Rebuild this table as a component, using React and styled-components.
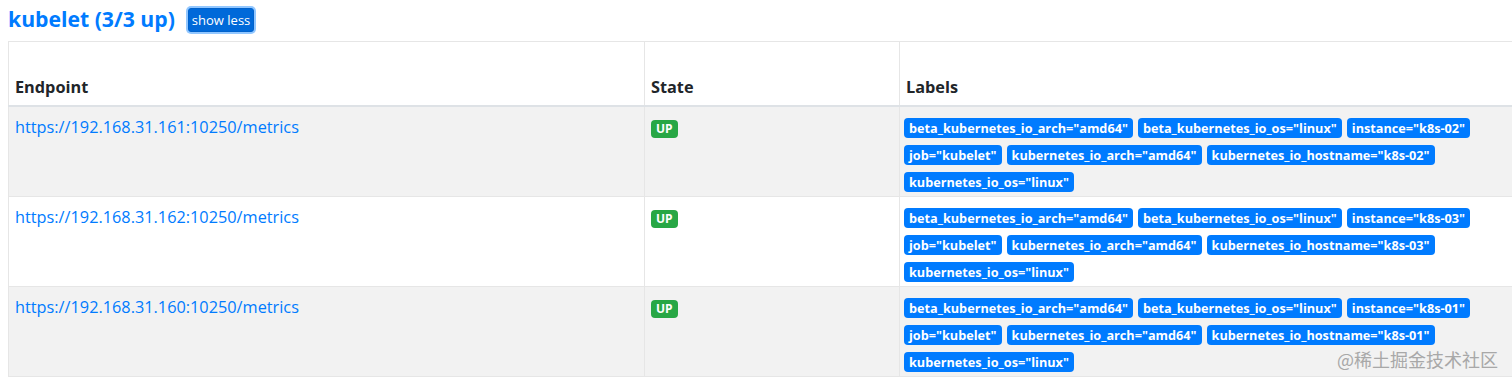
import React from 'react';
import styled, { createGlobalStyle } from 'styled-components';

const GlobalStyle = createGlobalStyle`
  html, body {
    margin: 0;
    padding: 0;
    overflow: hidden;
    background: #fff;
  }
  body {
    font-family: "Open Sans", "Noto Sans", sans-serif;
    color: #212529;
  }
`;

const Page = styled.div`
  position: relative;
  width: 1512px;
  height: 386px;
  padding: 0 0 0 8px;
  box-sizing: border-box;
`;

const TitleBar = styled.div`
  display: flex;
  align-items: center;
  height: 38px;
  gap: 13px;
`;

const Title = styled.a`
  font-size: 21.2px;
  font-weight: 700;
  color: #007bff;
  text-decoration: none;
  line-height: 1;
`;

const Button = styled.button`
  font-family: inherit;
  font-size: 13px;
  line-height: 18px;
  color: #fff;
  background: #0069d9;
  border: 1px solid #0062cc;
  border-radius: 3px;
  padding: 2px 3px;
  box-shadow: 0 0 0 2px rgba(38, 143, 255, 0.5);
  margin-top: 2px;
`;

const Table = styled.table`
  width: 1540px;
  border-collapse: collapse;
  table-layout: fixed;
  margin-top: 3px;
  font-size: 16.3px;
  line-height: 24px;
`;

const HeadCell = styled.th`
  height: 57px;
  text-align: left;
  vertical-align: bottom;
  padding: 0 6px 6px;
  border: 1px solid #e6e6e6;
  border-bottom: 2px solid #dee2e6;
  font-weight: 700;
`;

const Row = styled.tr`
  background: ${(p) => (p.$striped ? '#f2f2f2' : '#fff')};
`;

const Cell = styled.td`
  vertical-align: top;
  padding: 8px 6px 7px;
  border: 1px solid #e6e6e6;
`;

const LabelCell = styled(Cell)`
  padding: 11px 4px 4px;
`;

const Link = styled.a`
  color: #007bff;
  text-decoration: none;
`;

const Badge = styled.span`
  display: inline-block;
  font-size: 12px;
  font-weight: 700;
  line-height: 18px;
  padding: 0 5px;
  border-radius: 4px;
  color: #fff;
  background: ${(p) => p.$color};
  margin-top: 3px;
`;

const Labels = styled.div`
  display: flex;
  flex-wrap: wrap;
  gap: 7px 5px;
  max-width: 600px;
`;

const LabelBadge = styled.span`
  display: inline-block;
  font-size: 12.7px;
  font-weight: 700;
  line-height: 20px;
  padding: 0 5px;
  border-radius: 4px;
  color: #fff;
  background: #007bff;
  white-space: nowrap;
`;

const Watermark = styled.div`
  position: absolute;
  right: 14px;
  bottom: 14px;
  font-family: "Noto Sans CJK SC", sans-serif;
  font-size: 18px;
  color: #a0a0a0;
  opacity: 0.9;
`;

const targets = [
  { ip: '192.168.31.161', host: 'k8s-02', striped: true },
  { ip: '192.168.31.162', host: 'k8s-03', striped: false },
  { ip: '192.168.31.160', host: 'k8s-01', striped: true },
];

const App = () => (
  <Page>
    <GlobalStyle />
    <TitleBar>
      <Title href="#kubelet">kubelet (3/3 up)</Title>
      <Button>show less</Button>
    </TitleBar>
    <Table>
      <colgroup>
        <col style={{ width: 636 }} />
        <col style={{ width: 255 }} />
        <col />
      </colgroup>
      <thead>
        <tr>
          <HeadCell>Endpoint</HeadCell>
          <HeadCell>State</HeadCell>
          <HeadCell>Labels</HeadCell>
        </tr>
      </thead>
      <tbody>
        {targets.map((t) => {
          const labels = [
            'beta_kubernetes_io_arch="amd64"',
            'beta_kubernetes_io_os="linux"',
            `instance="${t.host}"`,
            'job="kubelet"',
            'kubernetes_io_arch="amd64"',
            `kubernetes_io_hostname="${t.host}"`,
            'kubernetes_io_os="linux"',
          ];
          return (
            <Row key={t.ip} $striped={t.striped}>
              <Cell>
                <Link href="#">{`https://${t.ip}:10250/metrics`}</Link>
              </Cell>
              <Cell>
                <Badge $color="#28a745">UP</Badge>
              </Cell>
              <LabelCell>
                <Labels>
                  {labels.map((l) => (
                    <LabelBadge key={l}>{l}</LabelBadge>
                  ))}
                </Labels>
              </LabelCell>
            </Row>
          );
        })}
      </tbody>
    </Table>
    <Watermark>@稀土掘金技术社区</Watermark>
  </Page>
);

export default App;
